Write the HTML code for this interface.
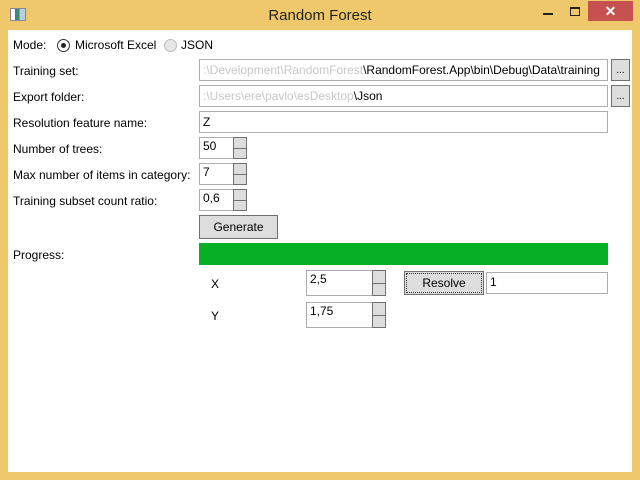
<!DOCTYPE html><html><head><style>
body{margin:0;width:640px;height:480px;background:#f0c86c;font-family:"Liberation Sans",sans-serif;font-size:12px;color:#000;position:relative;overflow:hidden}
.a{position:absolute}
.client{left:8px;top:30px;width:624px;height:442px;background:#fff}
.tb{position:absolute;border:1px solid #abadb3;background:#fff;box-sizing:border-box;padding:1px 3px;white-space:nowrap;overflow:hidden}
.btn{position:absolute;border:1px solid #707070;background:#dddddd;box-sizing:border-box;text-align:center}
.sp{position:absolute;width:14px;box-sizing:border-box;border:1px solid #707070;background:#ddd}
.sp:after{content:"";position:absolute;left:0;right:0;top:50%;border-top:1px solid #707070}
.ghost{color:#c8c8c8}
</style></head><body>
<div class="a" style="left:10px;top:8px;width:14px;height:11px;border:1px solid #889;background:linear-gradient(90deg,#fff 0 30%,#3a8a7a 30% 60%,#bcd 60%)"></div>
<div class="a" style="left:0;width:640px;top:7px;text-align:center;font-size:15px;color:#222">Random Forest</div>
<div class="a" style="left:543px;top:13px;width:10px;height:2px;background:#222"></div>
<div class="a" style="left:570px;top:7px;width:8px;height:6px;border:1px solid #222;border-top-width:2px"></div>
<div class="a" style="left:588px;top:1px;width:45px;height:20px;background:#c75050;color:#fff;text-align:center;font-size:14px;font-weight:bold;line-height:20px">✕</div>
<div class="a client"></div>
<div class="a" style="left:13px;top:38px">Mode:</div>
<div class="a" style="left:57px;top:39px;width:11px;height:11px;border:1px solid #333;border-radius:50%;background:#fff"></div>
<div class="a" style="left:61px;top:43px;width:5px;height:5px;border-radius:50%;background:#222"></div>
<div class="a" style="left:75px;top:38px">Microsoft Excel</div>
<div class="a" style="left:164px;top:39px;width:11px;height:11px;border:1px solid #bbb;border-radius:50%;background:#e6e6e6"></div>
<div class="a" style="left:181px;top:38px">JSON</div>
<div class="a" style="left:13px;top:64px">Training set:</div>
<div class="a" style="left:13px;top:90px">Export folder:</div>
<div class="a" style="left:13px;top:116px">Resolution feature name:</div>
<div class="a" style="left:13px;top:142px">Number of trees:</div>
<div class="a" style="left:13px;top:168px">Max number of items in category:</div>
<div class="a" style="left:13px;top:194px">Training subset count ratio:</div>
<div class="a" style="left:13px;top:248px">Progress:</div>
<div class="tb" style="left:199px;top:59px;width:409px;height:22px;padding-top:3px"><span class="ghost">:\Development\RandomForest</span>\RandomForest.App\bin\Debug\Data\training</div>
<div class="btn" style="left:611px;top:59px;width:19px;height:22px;font-size:10px;line-height:22px">...</div>
<div class="tb" style="left:199px;top:85px;width:409px;height:22px;padding-top:3px"><span class="ghost">:\Users\ere\pavlo\esDesktop</span>\Json</div>
<div class="btn" style="left:611px;top:85px;width:19px;height:22px;font-size:10px;line-height:22px">...</div>
<div class="tb" style="left:199px;top:111px;width:409px;height:22px;padding-top:3px">Z</div>
<div class="tb" style="left:199px;top:137px;width:35px;height:22px">50</div><div class="sp" style="left:233px;top:137px;height:22px"></div>
<div class="tb" style="left:199px;top:163px;width:35px;height:22px">7</div><div class="sp" style="left:233px;top:163px;height:22px"></div>
<div class="tb" style="left:199px;top:189px;width:35px;height:22px">0,6</div><div class="sp" style="left:233px;top:189px;height:22px"></div>
<div class="btn" style="left:199px;top:215px;width:79px;height:24px;line-height:22px">Generate</div>
<div class="a" style="left:199px;top:243px;width:409px;height:22px;background:#06b025"></div>
<div class="a" style="left:211px;top:277px">X</div>
<div class="a" style="left:211px;top:309px">Y</div>
<div class="tb" style="left:306px;top:270px;width:67px;height:26px">2,5</div><div class="sp" style="left:372px;top:270px;height:26px"></div>
<div class="tb" style="left:306px;top:302px;width:67px;height:26px">1,75</div><div class="sp" style="left:372px;top:302px;height:26px"></div>
<div class="btn" style="left:404px;top:271px;width:80px;height:24px;line-height:22px;outline:1px dotted #333;outline-offset:-3px">Resolve</div>
<div class="tb" style="left:486px;top:272px;width:122px;height:22px;padding-top:2px">1</div>
</body></html>
